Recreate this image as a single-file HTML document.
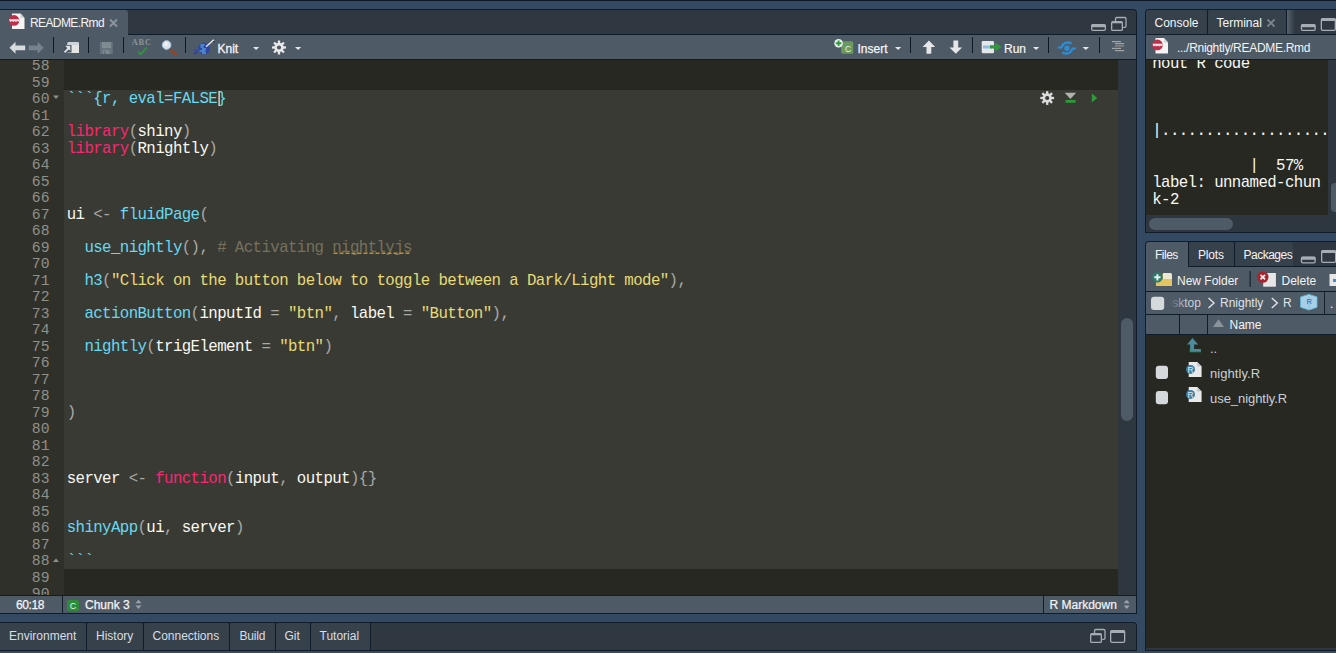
<!DOCTYPE html>
<html><head><meta charset="utf-8">
<style>
*{margin:0;padding:0;box-sizing:border-box}
html,body{width:1336px;height:653px;overflow:hidden;background:#334a62;font-family:"Liberation Sans",sans-serif;font-size:12px;color:#fff}
.a{position:absolute}
.ln{position:absolute;left:66.7px;height:16.5px;line-height:16.5px;font-family:"Liberation Mono",monospace;font-size:15.75px;letter-spacing:-0.6px;white-space:pre;color:#f8f8f2}
.gn{position:absolute;left:0;width:49.5px;text-align:right;height:16.5px;line-height:16.5px;font-family:"Liberation Mono",monospace;font-size:14.75px;color:#8f908a}
.kw{color:#f92672} .fn{color:#66d9ef} .st{color:#e6db74} .cm{color:#75715e} .cmu{color:#75715e}
.pn{color:#a8a8a4} .op{color:#a8a8a4} .tx{color:#f8f8f2} .hd{color:#66d9ef} .hdc{color:#66d9ef}
.ui{position:absolute;font-family:"Liberation Sans",sans-serif;font-size:12px;color:#f4f4f4;white-space:nowrap;line-height:14px}
.con{position:absolute;left:1153px;font-family:"Liberation Mono",monospace;font-size:15.75px;letter-spacing:-0.6px;white-space:pre;color:#f8f8f2;line-height:16px}
</style></head><body>
<div class="a" style="left:0;top:0;width:1336px;height:1px;background:#0e1a27"></div>

<!-- ===== LEFT EDITOR PANE ===== -->
<div class="a" style="left:0;top:9px;width:1137px;height:605px;background:#0f1d2b;border-top-right-radius:4px"></div>
<div class="a" style="left:0;top:10px;width:1136px;height:24px;background:#2f3841;border-top-right-radius:3px"></div>
<div class="a" style="left:0;top:10px;width:128px;height:25px;background:#4e5a66;border-top-right-radius:3px"></div>
<div class="ui" style="left:30px;top:16px;letter-spacing:-0.6px">README.Rmd</div>
<div class="a" style="left:0;top:35px;width:1136px;height:24px;background:#4e5a66"></div>
<div class="ui" style="left:217.5px;top:42px;-webkit-text-stroke:0.3px #f4f4f4">Knit</div>
<div class="ui" style="left:857.5px;top:42px;-webkit-text-stroke:0.25px #f4f4f4">Insert</div>
<div class="ui" style="left:1004px;top:42px;-webkit-text-stroke:0.2px #f4f4f4">Run</div>
<div class="a" style="left:0;top:60px;width:1118px;height:535px;background:#272822;overflow:hidden">
  <div class="a" style="left:0;top:0;width:64px;height:535px;background:#2f3029"></div>
  <div class="a" style="left:64px;top:30.30px;width:1054px;height:478.50px;background:#3a3a34"></div>
  <div class="a" style="left:0;top:-60px;width:1118px;height:655px">
  <div class="gn" style="top:58.30px">58</div><div class="gn" style="top:74.80px">59</div><div class="gn" style="top:91.30px">60</div><div class="gn" style="top:107.80px">61</div><div class="gn" style="top:124.30px">62</div><div class="gn" style="top:140.80px">63</div><div class="gn" style="top:157.30px">64</div><div class="gn" style="top:173.80px">65</div><div class="gn" style="top:190.30px">66</div><div class="gn" style="top:206.80px">67</div><div class="gn" style="top:223.30px">68</div><div class="gn" style="top:239.80px">69</div><div class="gn" style="top:256.30px">70</div><div class="gn" style="top:272.80px">71</div><div class="gn" style="top:289.30px">72</div><div class="gn" style="top:305.80px">73</div><div class="gn" style="top:322.30px">74</div><div class="gn" style="top:338.80px">75</div><div class="gn" style="top:355.30px">76</div><div class="gn" style="top:371.80px">77</div><div class="gn" style="top:388.30px">78</div><div class="gn" style="top:404.80px">79</div><div class="gn" style="top:421.30px">80</div><div class="gn" style="top:437.80px">81</div><div class="gn" style="top:454.30px">82</div><div class="gn" style="top:470.80px">83</div><div class="gn" style="top:487.30px">84</div><div class="gn" style="top:503.80px">85</div><div class="gn" style="top:520.30px">86</div><div class="gn" style="top:536.80px">87</div><div class="gn" style="top:553.30px">88</div><div class="gn" style="top:569.80px">89</div><div class="gn" style="top:586.30px">90</div>
  <div class="ln" style="top:91.30px"><span class="hd">```{r, eval=FALSE</span><span class="hdc">}</span></div><div class="ln" style="top:124.30px"><span class="kw">library</span><span class="pn">(</span><span class="tx">shiny</span><span class="pn">)</span></div><div class="ln" style="top:140.80px"><span class="kw">library</span><span class="pn">(</span><span class="tx">Rnightly</span><span class="pn">)</span></div><div class="ln" style="top:206.80px"><span class="tx">ui </span><span class="op">&lt;- </span><span class="fn">fluidPage</span><span class="pn">(</span></div><div class="ln" style="top:239.80px"><span class="tx">  </span><span class="fn">use_nightly</span><span class="pn">()</span><span class="pn">, </span><span class="cm"># Activating </span><span class="cmu">nightlyjs</span></div><div class="ln" style="top:272.80px"><span class="tx">  </span><span class="fn">h3</span><span class="pn">(</span><span class="st">"Click on the button below to toggle between a Dark/Light mode"</span><span class="pn">)</span><span class="pn">,</span></div><div class="ln" style="top:305.80px"><span class="tx">  </span><span class="fn">actionButton</span><span class="pn">(</span><span class="tx">inputId </span><span class="op">= </span><span class="st">"btn"</span><span class="pn">, </span><span class="tx">label </span><span class="op">= </span><span class="st">"Button"</span><span class="pn">)</span><span class="pn">,</span></div><div class="ln" style="top:338.80px"><span class="tx">  </span><span class="fn">nightly</span><span class="pn">(</span><span class="tx">trigElement </span><span class="op">= </span><span class="st">"btn"</span><span class="pn">)</span></div><div class="ln" style="top:404.80px"><span class="pn">)</span></div><div class="ln" style="top:470.80px"><span class="tx">server </span><span class="op">&lt;- </span><span class="kw">function</span><span class="pn">(</span><span class="tx">input</span><span class="pn">, </span><span class="tx">output</span><span class="pn">)</span><span class="pn">{}</span></div><div class="ln" style="top:520.30px"><span class="fn">shinyApp</span><span class="pn">(</span><span class="tx">ui</span><span class="pn">, </span><span class="tx">server</span><span class="pn">)</span></div><div class="ln" style="top:553.30px"><span class="hd">```</span></div>
  </div>
</div>
<div class="a" style="left:1118px;top:60px;width:18px;height:535px;background:#2e3640"></div>
<div class="a" style="left:1121px;top:318px;width:12px;height:103px;background:#4e5a66;border-radius:6px"></div>
<div class="a" style="left:0;top:596px;width:1136px;height:17px;background:#4e5a66"></div>
<div class="a" style="left:62px;top:596px;width:1px;height:17px;background:#0f1d2b"></div>
<div class="ui" style="left:16px;top:598px;letter-spacing:-0.4px;-webkit-text-stroke:0.25px #f4f4f4">60:18</div>
<div class="a" style="left:67px;top:600px;width:12px;height:11px;background:#2e8b3a;border-radius:2px"></div>
<div class="a" style="left:67px;top:598.5px;width:12px;line-height:14px;font-size:9px;text-align:center;color:#e8f0e8">C</div>
<div class="ui" style="left:85px;top:598px;-webkit-text-stroke:0.25px #f4f4f4">Chunk 3</div>
<div class="a" style="left:1043px;top:596px;width:1px;height:17px;background:#0f1d2b"></div>
<div class="ui" style="left:1049.5px;top:598px;-webkit-text-stroke:0.2px #f4f4f4">R Markdown</div>

<!-- ===== BOTTOM LEFT PANE ===== -->
<div class="a" style="left:0;top:622px;width:1137px;height:29px;background:#0f1d2b;border-top-right-radius:4px"></div>
<div class="a" style="left:0;top:623px;width:1136px;height:27px;background:#2f3841;border-top-right-radius:3px"></div>
<div class="a" style="left:0;top:623px;width:86px;height:27px;background:#37414b;border-top-right-radius:3px"></div>
<div class="a" style="left:87px;top:623px;width:56px;height:27px;background:#37414b;border-radius:3px 3px 0 0"></div>
<div class="a" style="left:144px;top:623px;width:85px;height:27px;background:#37414b;border-radius:3px 3px 0 0"></div>
<div class="a" style="left:230px;top:623px;width:45px;height:27px;background:#37414b;border-radius:3px 3px 0 0"></div>
<div class="a" style="left:276px;top:623px;width:34px;height:27px;background:#37414b;border-radius:3px 3px 0 0"></div>
<div class="a" style="left:311px;top:623px;width:59px;height:27px;background:#37414b;border-radius:3px 3px 0 0"></div>
<div class="a" style="left:86px;top:623px;width:1px;height:27px;background:#0f1d2b"></div><div class="a" style="left:143px;top:623px;width:1px;height:27px;background:#0f1d2b"></div><div class="a" style="left:229px;top:623px;width:1px;height:27px;background:#0f1d2b"></div><div class="a" style="left:275px;top:623px;width:1px;height:27px;background:#0f1d2b"></div><div class="a" style="left:310px;top:623px;width:1px;height:27px;background:#0f1d2b"></div><div class="a" style="left:370px;top:623px;width:1px;height:27px;background:#0f1d2b"></div>
<div class="ui" style="left:9px;top:628.8px;color:#d8dee4">Environment</div>
<div class="ui" style="left:96px;top:628.8px;color:#d8dee4">History</div>
<div class="ui" style="left:152.5px;top:628.8px;color:#d8dee4">Connections</div>
<div class="ui" style="left:239.5px;top:628.8px;color:#d8dee4;letter-spacing:-0.2px">Build</div>
<div class="ui" style="left:284.5px;top:628.8px;color:#d8dee4">Git</div>
<div class="ui" style="left:319.5px;top:628.8px;color:#d8dee4">Tutorial</div>

<!-- ===== RIGHT TOP PANE (console) ===== -->
<div class="a" style="left:1145px;top:9px;width:191px;height:224px;background:#0f1d2b;border-top-left-radius:4px"></div>
<div class="a" style="left:1146px;top:10px;width:190px;height:24px;background:#2f3841;border-top-left-radius:3px"></div>
<div class="a" style="left:1146px;top:10px;width:61px;height:24px;background:#37414b;border-top-left-radius:3px"></div>
<div class="a" style="left:1208px;top:10px;width:78px;height:24px;background:#37414b;border-radius:3px 3px 0 0"></div>
<div class="a" style="left:1287px;top:10px;width:8px;height:24px;background:linear-gradient(90deg,#56616c,#3a444e 70%,#2f3841)"></div>
<div class="a" style="left:1207px;top:10px;width:1px;height:24px;background:#0f1d2b"></div><div class="a" style="left:1286px;top:10px;width:1px;height:24px;background:#0f1d2b"></div>
<div class="ui" style="left:1154.5px;top:16px;">Console</div>
<div class="ui" style="left:1216.5px;top:16px;">Terminal</div>
<div class="a" style="left:1146px;top:35px;width:190px;height:24px;background:#4e5a66"></div>
<div class="ui" style="left:1177px;top:41px;letter-spacing:-0.3px">.../Rnightly/README.Rmd</div>
<div class="a" style="left:1146px;top:60px;width:190px;height:155px;background:#272822;overflow:hidden">
  <div class="con" style="left:6.2px;top:-4px">nout R code</div>
  <div class="con" style="left:6.2px;top:114.5px">label: unnamed-chun</div>
  <div class="con" style="left:6.2px;top:132.3px">k-2</div>
  <div class="con" style="left:6.2px;top:98px">           |  57%</div>
  <div class="con" style="left:6.2px;top:63.3px">|.............................</div>
  <div class="a" style="left:182px;top:0;width:8px;height:155px;background:#2e3640"></div><div class="a" style="left:185px;top:123px;width:8px;height:28.5px;background:#4e5a66;border-radius:4px"></div>
</div>
<div class="a" style="left:1146px;top:215px;width:190px;height:17px;background:#2e3640"></div>
<div class="a" style="left:1149px;top:218px;width:84px;height:12px;background:#4e5a66;border-radius:6px"></div>

<!-- ===== RIGHT BOTTOM PANE (files) ===== -->
<div class="a" style="left:1145px;top:241px;width:191px;height:410px;background:#0f1d2b;border-top-left-radius:4px"></div>
<div class="a" style="left:1146px;top:242px;width:190px;height:24px;background:#2f3841;border-top-left-radius:3px"></div>
<div class="a" style="left:1146px;top:242px;width:42px;height:25px;background:#4e5a66;border-top-left-radius:3px"></div>
<div class="a" style="left:1189px;top:242px;width:45px;height:24px;background:#37414b;border-radius:3px 3px 0 0"></div>
<div class="a" style="left:1235px;top:242px;width:58px;height:24px;background:#37414b;border-radius:3px 3px 0 0"></div>
<div class="a" style="left:1188px;top:242px;width:1px;height:24px;background:#0f1d2b"></div><div class="a" style="left:1234px;top:242px;width:1px;height:24px;background:#0f1d2b"></div>
<div class="ui" style="left:1155px;top:248px;letter-spacing:-0.5px">Files</div>
<div class="ui" style="left:1198px;top:248px;letter-spacing:-0.2px">Plots</div>
<div class="ui" style="left:1243.5px;top:248px;letter-spacing:-0.5px">Packages</div>
<div class="a" style="left:1146px;top:267px;width:190px;height:24px;background:#4e5a66"></div>
<div class="ui" style="left:1177px;top:274px;">New Folder</div>
<div class="ui" style="left:1281.5px;top:274px;">Delete</div>
<div class="a" style="left:1146px;top:292px;width:190px;height:22px;background:#4e5a66"></div>
<div class="ui" style="left:1165.5px;top:295.8px;color:#c8d2da">esktop</div>
<div class="a" style="left:1165px;top:293px;width:22px;height:20px;background:linear-gradient(90deg,#4e5a66 20%,rgba(78,90,102,0))"></div>
<div class="ui" style="left:1220px;top:295.8px;color:#dde4ea">Rnightly</div>
<div class="ui" style="left:1283px;top:295.8px;color:#dde4ea">R</div>
<div class="ui" style="left:1330px;top:296.6px;">.</div>
<div class="a" style="left:1146px;top:315px;width:190px;height:19px;background:#4e5a66"></div>
<div class="a" style="left:1179px;top:315px;width:1px;height:19px;background:#0f1d2b"></div>
<div class="a" style="left:1207px;top:315px;width:1px;height:19px;background:#0f1d2b"></div>
<div class="ui" style="left:1229.5px;top:317.8px;">Name</div>
<div class="a" style="left:1146px;top:335px;width:190px;height:313px;background:#272822"></div>
<div class="a" style="left:1146px;top:648px;width:190px;height:2px;background:#2e3842"></div>
<div class="ui" style="left:1210px;top:342px;color:#c8d0d8;font-size:13px">..</div>
<div class="ui" style="left:1210px;top:367px;color:#c8d0d8;font-size:13px;letter-spacing:0.05px">nightly.R</div>
<div class="ui" style="left:1210px;top:392px;color:#c8d0d8;font-size:13px;letter-spacing:-0.05px">use_nightly.R</div>

<svg class="a" style="left:0;top:0" width="1336" height="653" viewBox="0 0 1336 653"><path d="M12.0 13.5h8.5l4 4.5v11h-12.5z" fill="#f4f4f4"/><path d="M20.5 13.5v4.5h4" fill="#d0d4d8"/><circle cx="14.0" cy="20.4" r="5.3" fill="#c22d4a"/><path d="M9.0 19.2h10v2.6l-1.5 -0.8l-1.5 0.9l-1.4 -0.9l-1.5 0.9l-1.4 -0.9l-1.6 0.9z" fill="#f2e4e6"/><path d="M110 19.5l7 7M117 19.5l-7 7" stroke="#8d969d" stroke-width="1.8"/><rect x="1091.65" y="24.65" width="13.7" height="5.7" rx="1.3" fill="none" stroke="#a6adb3" stroke-width="1.3"/><rect x="1091.5" y="24.3" width="14" height="3" rx="1" fill="#a6adb3"/><path d="M1115.5 21v-2.2q0-1.3 1.3-1.3h7.9q1.3 0 1.3 1.3v7.2q0 1.3-1.3 1.3h-1.5" fill="none" stroke="#a6adb3" stroke-width="1.3"/><rect x="1111.65" y="21.65" width="10.7" height="8.7" rx="1.2" fill="none" stroke="#a6adb3" stroke-width="1.3"/><rect x="1112" y="21.3" width="10" height="2" fill="#a6adb3"/><path d="M9.5 47.8l6-6v3.6h9.7v4.8h-9.7v3.6z" fill="#d9dcde"/><path d="M43.7 47.8l-6-6v3.6h-9v4.8h9v3.6z" fill="#76828c"/><rect x="53" y="37" width="1" height="16" fill="#0e1822"/><path d="M69 42h8.5q1.5 0 1.5 1.5v9.5h-11.5v-9.5q0-1.5 1.5-1.5z" fill="#e4e4e2"/><path d="M69 42h8.5q1.5 0 1.5 1.5v1.5h-11.5v-1.5q0-1.5 1.5-1.5z" fill="#cdd5dc"/><path d="M64 45h7.5v7.5h-7.5z" fill="#46525e"/><path d="M64.5 52.3l4.8-4.8" stroke="#dfe3e6" stroke-width="1.8"/><path d="M65 45.8h5.3v5.3z" fill="#dfe3e6"/><rect x="88" y="37" width="1" height="16" fill="#0e1822"/><rect x="100" y="42" width="12.8" height="12" fill="#66747e"/><rect x="102" y="42" width="9" height="5" fill="#7f8990"/><rect x="102" y="47" width="9" height="0.9" fill="#6e9aa8"/><rect x="103" y="50.2" width="6.5" height="3.8" fill="#7f8990"/><rect x="104" y="50.8" width="1.8" height="3.2" fill="#66747e"/><rect x="123" y="37" width="1" height="16" fill="#0e1822"/><text x="141.8" y="45.3" font-family="Liberation Serif" font-weight="bold" font-size="8.3" fill="#8a949b" text-anchor="middle" letter-spacing="0.9">ABC</text><path d="M138 51.5l2.6 3l6.2-7.3" fill="none" stroke="#2a9a36" stroke-width="1.6"/><path d="M171.3 50.3l4.6 3.9" stroke="#8e4628" stroke-width="2.8" stroke-linecap="round"/><circle cx="166.6" cy="45" r="4.3" fill="#dde3e8" stroke="#a8cce4" stroke-width="1"/><circle cx="165.8" cy="44" r="2.2" fill="#eceef0"/><rect x="185" y="37" width="1" height="16" fill="#0e1822"/><path d="M194 50.5q2 0.5 3.5 0M194.5 53q2 -1 3.5 -0.5M193.5 54q2-0.3 4-1.5" stroke="#2a3fa0" stroke-width="1" fill="none"/><circle cx="204" cy="48.7" r="5.9" fill="#2c45a8"/><path d="M200.5 45h4M200.5 47h3M202 49h4M199.5 51h6M202 53h4" stroke="#68c4e4" stroke-width="1" fill="none"/><path d="M206 46.8l7-6.3" stroke="#e6e6e6" stroke-width="1.4"/><circle cx="213.3" cy="40.4" r="1" fill="#f0f0f0"/><circle cx="213.8" cy="41.4" r="0.7" fill="#111"/><path d="M253 47h6.2l-3.1 3z" fill="#e6e6e6"/><circle cx="279" cy="47.5" r="4.76" fill="#e8e8e8"/><rect x="277.85" y="40.50" width="2.3" height="7.00" fill="#e8e8e8" transform="rotate(0 279 47.5)"/><rect x="277.85" y="40.50" width="2.3" height="7.00" fill="#e8e8e8" transform="rotate(45 279 47.5)"/><rect x="277.85" y="40.50" width="2.3" height="7.00" fill="#e8e8e8" transform="rotate(90 279 47.5)"/><rect x="277.85" y="40.50" width="2.3" height="7.00" fill="#e8e8e8" transform="rotate(135 279 47.5)"/><rect x="277.85" y="40.50" width="2.3" height="7.00" fill="#e8e8e8" transform="rotate(180 279 47.5)"/><rect x="277.85" y="40.50" width="2.3" height="7.00" fill="#e8e8e8" transform="rotate(225 279 47.5)"/><rect x="277.85" y="40.50" width="2.3" height="7.00" fill="#e8e8e8" transform="rotate(270 279 47.5)"/><rect x="277.85" y="40.50" width="2.3" height="7.00" fill="#e8e8e8" transform="rotate(315 279 47.5)"/><circle cx="279" cy="47.5" r="2.10" fill="#4e5a66"/><path d="M295 47h6.2l-3.1 3z" fill="#e6e6e6"/><rect x="841.2" y="41.2" width="12" height="12.6" rx="1.5" fill="#6a9a5e"/><text x="848" y="51.6" font-family="Liberation Sans" font-size="8.5" fill="#eef2ec" text-anchor="middle">C</text><circle cx="838.6" cy="43.3" r="4.3" fill="#eef0f0"/><path d="M838.6 40.5v5.6M835.8 43.3h5.6" stroke="#2c9a3a" stroke-width="1.9"/><path d="M895 47h6.2l-3.1 3z" fill="#e6e6e6"/><rect x="910" y="37" width="1" height="16" fill="#0e1822"/><path d="M928.9 40.6l6.3 6.4h-3.9v6.8h-4.8v-6.8h-3.9z" fill="#e4e6e8"/><path d="M955.8 53.8l6.3-6.4h-3.9v-6.8h-4.8v6.8h-3.9z" fill="#e4e6e8"/><rect x="972" y="37" width="1" height="16" fill="#0e1822"/><rect x="981.7" y="41" width="12.3" height="12.2" rx="1.2" fill="#e6e7e8"/><rect x="983" y="45.5" width="9" height="3" fill="#8fbde6"/><path d="M990 45.3h5v-2.9l6.7 4.5l-6.7 4.5v-2.9h-5z" fill="#2f9a3a"/><path d="M1033 47h6.2l-3.1 3z" fill="#e6e6e6"/><rect x="1048" y="37" width="1" height="16" fill="#0e1822"/><path d="M1058 47.5h3.5q1.5-5 6.5-5.2q2.5 0 3.5 1.6" stroke="#2b8fd8" stroke-width="2.2" fill="none"/><path d="M1076 48.5h-3.5q-1.5 5-6.5 5.2q-2.5 0-3.5-1.6" stroke="#2b8fd8" stroke-width="2.2" fill="none"/><path d="M1067 45.2l2.6 1.6v2.8l-2.6 1.6l-2.6-1.6v-2.8z" fill="#2b8fd8"/><path d="M1082.6 47h6.4l-3.2 3z" fill="#e6e6e6"/><rect x="1099" y="37" width="1" height="16" fill="#0e1822"/><rect x="1112" y="41" width="9" height="1.2" fill="#9ea4a8"/><rect x="1115" y="43" width="9" height="1.2" fill="#9ea4a8"/><rect x="1115" y="45.2" width="9" height="1.4" fill="#8f8f7c"/><rect x="1112" y="47.8" width="9" height="1.2" fill="#9ea4a8"/><rect x="1115" y="50" width="9" height="1.2" fill="#9ea4a8"/><path d="M53 95.5h6l-3 3.5z" fill="#8f908a"/><path d="M53 562h6l-3-3.5z" fill="#8f908a"/><circle cx="1047.2" cy="98" r="4.69" fill="#dcdcdc"/><rect x="1046.05" y="91.10" width="2.3" height="6.90" fill="#dcdcdc" transform="rotate(0 1047.2 98)"/><rect x="1046.05" y="91.10" width="2.3" height="6.90" fill="#dcdcdc" transform="rotate(45 1047.2 98)"/><rect x="1046.05" y="91.10" width="2.3" height="6.90" fill="#dcdcdc" transform="rotate(90 1047.2 98)"/><rect x="1046.05" y="91.10" width="2.3" height="6.90" fill="#dcdcdc" transform="rotate(135 1047.2 98)"/><rect x="1046.05" y="91.10" width="2.3" height="6.90" fill="#dcdcdc" transform="rotate(180 1047.2 98)"/><rect x="1046.05" y="91.10" width="2.3" height="6.90" fill="#dcdcdc" transform="rotate(225 1047.2 98)"/><rect x="1046.05" y="91.10" width="2.3" height="6.90" fill="#dcdcdc" transform="rotate(270 1047.2 98)"/><rect x="1046.05" y="91.10" width="2.3" height="6.90" fill="#dcdcdc" transform="rotate(315 1047.2 98)"/><circle cx="1047.2" cy="98" r="2.07" fill="#3a3a34"/><path d="M1064.7 92.8h11.4l-5.7 6.1z" fill="#b1b2ae"/><rect x="1065.5" y="100" width="10" height="2.8" fill="#2e9a3a"/><path d="M1091.8 93.4l5.5 4.6l-5.5 4.6z" fill="#2e9a3a"/><path d="M135.5 603.2h6l-3-3.5z M135.5 605.6h6l-3 3.5z" fill="#9aa3ab"/><path d="M1123.7 603.2h6l-3-3.5z M1123.7 605.6h6l-3 3.5z" fill="#9aa3ab"/><path d="M1094.5 633v-2.2q0-1.3 1.3-1.3h7.9q1.3 0 1.3 1.3v7.2q0 1.3-1.3 1.3h-1.5" fill="none" stroke="#a6adb3" stroke-width="1.3"/><rect x="1090.65" y="633.65" width="10.7" height="8.7" rx="1.2" fill="none" stroke="#a6adb3" stroke-width="1.3"/><rect x="1091" y="633.3" width="10" height="2" fill="#a6adb3"/><rect x="1110.65" y="630.65" width="14" height="11.7" rx="1.3" fill="none" stroke="#a6adb3" stroke-width="1.3"/><rect x="1110.5" y="630.3" width="14.3" height="2.8" rx="1" fill="#a6adb3"/><rect x="1301.45" y="24.65" width="13.7" height="5.7" rx="1.3" fill="none" stroke="#a6adb3" stroke-width="1.3"/><rect x="1301.3" y="24.3" width="14" height="3" rx="1" fill="#a6adb3"/><rect x="1321.3500000000001" y="18.65" width="14" height="11.7" rx="1.3" fill="none" stroke="#a6adb3" stroke-width="1.3"/><rect x="1321.2" y="18.3" width="14.3" height="2.8" rx="1" fill="#a6adb3"/><path d="M1267.5 19.5l7 7M1274.5 19.5l-7 7" stroke="#79838b" stroke-width="1.8"/><path d="M1155.5 38.0h8.5l4 4.5v11h-12.5z" fill="#f4f4f4"/><path d="M1164 38.0v4.5h4" fill="#d0d4d8"/><circle cx="1157.5" cy="44.9" r="5.3" fill="#c22d4a"/><path d="M1152.5 43.7h10v2.6l-1.5 -0.8l-1.5 0.9l-1.4 -0.9l-1.5 0.9l-1.4 -0.9l-1.6 0.9z" fill="#f2e4e6"/><rect x="1301.45" y="257.15" width="13.7" height="5.7" rx="1.3" fill="none" stroke="#a6adb3" stroke-width="1.3"/><rect x="1301.3" y="256.8" width="14" height="3" rx="1" fill="#a6adb3"/><rect x="1321.65" y="250.65" width="14" height="11.7" rx="1.3" fill="none" stroke="#a6adb3" stroke-width="1.3"/><rect x="1321.5" y="250.3" width="14.3" height="2.8" rx="1" fill="#a6adb3"/><path d="M1156 276h5l1.5-2h8q1.5 0 1.5 1.5v10.5h-16z" fill="#b89a48"/><path d="M1163 273h7.5q1.5 0 1.5 1.5v5h-9z" fill="#ece6d2"/><path d="M1156 279.5h16v6.5h-16z" fill="#e2c460"/><circle cx="1157.4" cy="277.3" r="5.3" fill="#2a7a6e"/><path d="M1157.4 274.2v6.2M1154.3 277.3h6.2" stroke="#e8f0ee" stroke-width="2"/><rect x="1249.6" y="271" width="1" height="16" fill="#0e1822"/><rect x="1263.2" y="273" width="12.7" height="13.7" fill="#e6e6e6"/><circle cx="1262.8" cy="277.1" r="5.7" fill="#a8232c"/><path d="M1260.5 274.8l4.6 4.6M1265.1 274.8l-4.6 4.6" stroke="#f0f0f0" stroke-width="1.7"/><rect x="1329.5" y="274" width="8" height="12" fill="#e6e6e6"/><rect x="1333" y="279" width="3" height="3" fill="#3d8fd8"/><rect x="1151" y="296.8" width="13.2" height="13.2" rx="3" fill="#d5d9dc"/><path d="M1208.5 298l5.5 5l-5.5 5" stroke="#e0e4e8" stroke-width="1.4" fill="none"/><path d="M1271.8 298l5.5 5l-5.5 5" stroke="#e0e4e8" stroke-width="1.4" fill="none"/><path d="M1309 294.4L1317 296.9V307.2L1309 310L1300.6 307.2V296.9Z" fill="#a9cfe8" stroke="#62c0dc" stroke-width="0.8"/><path d="M1309 296.5V310" stroke="#6cc4dc" stroke-width="0.8"/><text x="1309.3" y="303.8" font-family="Liberation Sans" font-size="7.5" fill="#2a5ec0" text-anchor="middle">R</text><rect x="1324" y="292" width="1" height="22" fill="#17212b"/><path d="M1213 327.1l5.5-7.8l5.5 7.8z" fill="#8a939a"/><path d="M1192.5 338L1198.2 344.4H1194.1V349.1H1200.9V351.8H1190.1V344.4H1187Z" fill="#4a8c9c"/><path d="M1190.1 349v2.8h10.8" fill="none" stroke="#2f9a48" stroke-width="0.9"/><rect x="1155.8" y="365.8" width="12.2" height="13.2" rx="3" fill="#d5d9dc"/><rect x="1155.8" y="391" width="12.2" height="13.2" rx="3" fill="#d5d9dc"/><path d="M1188.7 362h8.5l4.4 4.4v10.7h-12.9z" fill="#e8e9ea"/><path d="M1197.2 362v4.4h4.4z" fill="#c4c8cc"/><circle cx="1190.5" cy="369.4" r="4.5" fill="#3b7ca2"/><text x="1190.6000000000001" y="372.6" font-size="8.5" font-family="Liberation Sans" fill="#e2eaf0" text-anchor="middle">R</text><path d="M1188.7 387h8.5l4.4 4.4v10.7h-12.9z" fill="#e8e9ea"/><path d="M1197.2 387v4.4h4.4z" fill="#c4c8cc"/><circle cx="1190.5" cy="394.4" r="4.5" fill="#3b7ca2"/><text x="1190.6000000000001" y="397.6" font-size="8.5" font-family="Liberation Sans" fill="#e2eaf0" text-anchor="middle">R</text><path d="M333.5 253.2h77.5" stroke="#c0902e" stroke-width="1.4" stroke-dasharray="4 2"/><rect x="218.5" y="91.5" width="1.2" height="14" fill="#f8f8f0"/></svg>
</body></html>
